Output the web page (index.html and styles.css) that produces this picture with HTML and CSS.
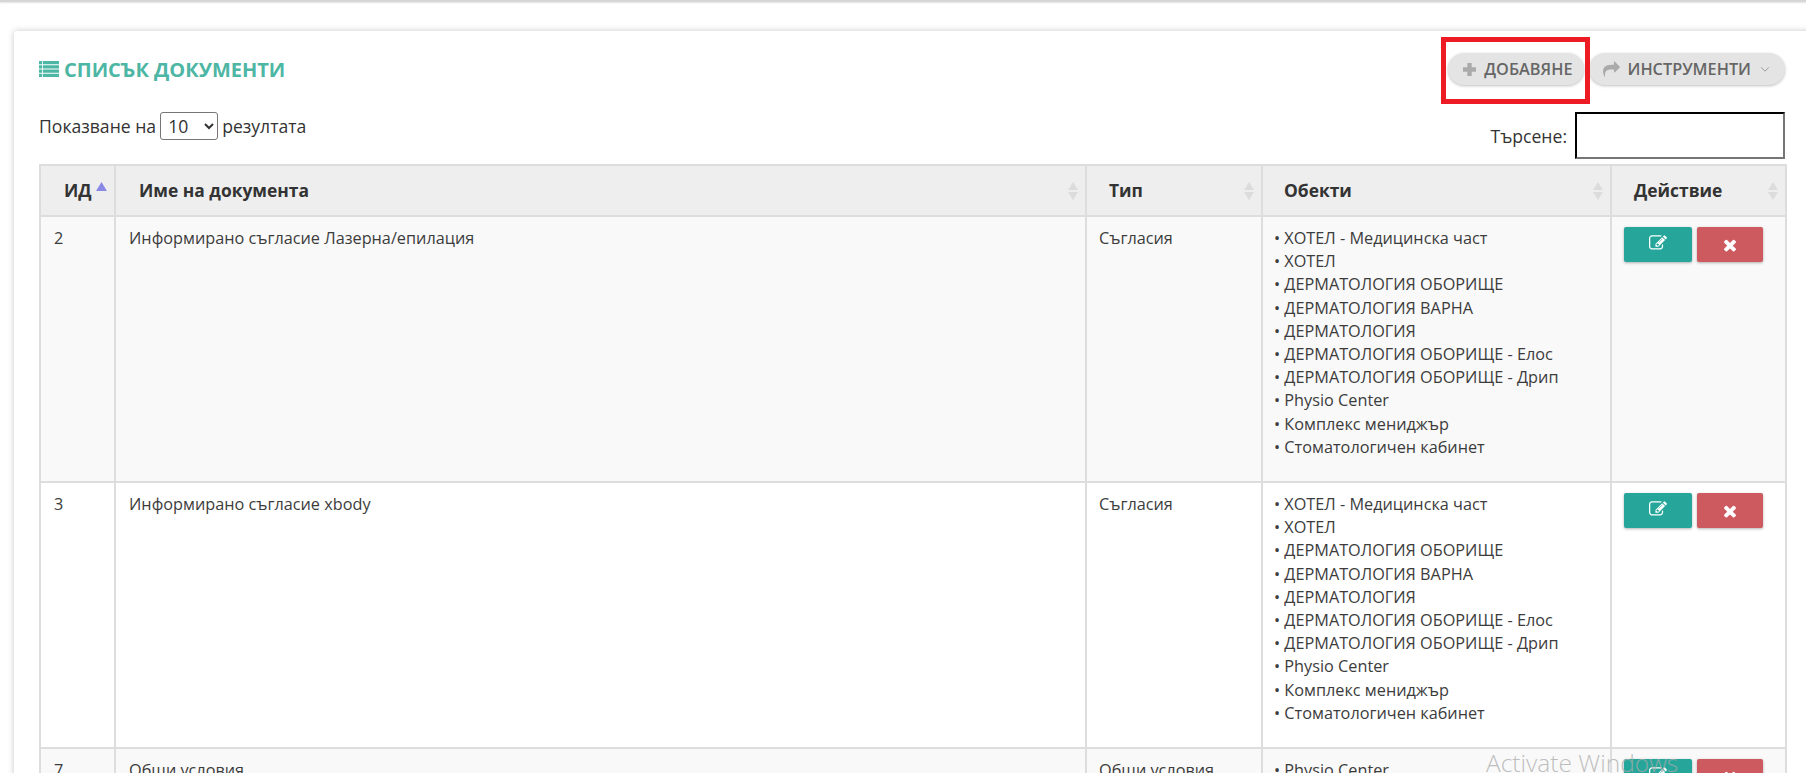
FILE: index.html
```html
<!DOCTYPE html>
<html lang="bg">
<head>
<meta charset="utf-8">
<title>Списък документи</title>
<link rel="stylesheet" href="styles.css">
</head>
<body>
<svg class="defs" aria-hidden="true">
  <symbol id="i-share" viewBox="0 0 1792 1792"><path d="M1792 640q0 26-19 45l-512 512q-19 19-45 19t-45-19-19-45v-256h-224q-98 0-175.500 6t-154 21.500-133 42.500-105.500 69.500-80 101-48.500 138.500-17.500 181q0 55 5 123 0 6 2.500 23.500t2.500 26.500q0 15-8.500 25t-23.500 10q-16 0-28-17-7-9-13-22t-13.500-30-10.500-24q-127-285-127-451 0-199 53-333 162-403 875-403h224v-256q0-26 19-45t45-19 45 19l512 512q19 19 19 45z"/></symbol>
  <symbol id="i-edit" viewBox="0 0 1792 1792"><path d="M888 1184l116-116-152-152-116 116v56h96v96h56zm440-720q-16-16-33 1l-350 350q-17 17-1 33t33-1l350-350q17-17 1-33zm80 594v190q0 119-84.500 203.500t-203.500 84.500h-832q-119 0-203.500-84.500t-84.500-203.500v-832q0-119 84.500-203.500t203.500-84.500h832q63 0 117 25 15 7 18 23 3 17-9 29l-49 49q-14 14-32 8-23-6-45-6h-832q-66 0-113 47t-47 113v832q0 66 47 113t113 47h832q66 0 113-47t47-113v-126q0-13 9-22l64-64q15-15 35-7t20 29zm-96-738l288 288-672 672h-288v-288zm444 132l-92 92-288-288 92-92q28-28 68-28t68 28l152 152q28 28 28 68t-28 68z"/></symbol>
  <symbol id="i-times" viewBox="0 0 1792 1792"><path d="M1490 1322q0 40-28 68l-136 136q-28 28-68 28t-68-28l-294-294-294 294q-28 28-68 28t-68-28l-136-136q-28-28-28-68t28-68l294-294-294-294q-28-28-28-68t28-68l136-136q28-28 68-28t68 28l294 294 294-294q28-28 68-28t68 28l136 136q28 28 28 68t-28 68l-294 294 294 294q28 28 28 68z"/></symbol>
  <symbol id="i-sort" viewBox="0 0 10 18"><path d="M5 0l5 8H0z"/><path d="M5 18l5-8H0z"/></symbol>
</svg>
<div class="topbar"></div>
<main class="card">
  <header class="card-head">
    <h1 class="title">
      <svg class="title-icon" viewBox="0 0 20 16"><path d="M0 0h3.200v3.200H0zM4 0h16v3.200H4zM0 4.270h3.200v3.200H0zM4 4.270h16v3.200H4zM0 8.530h3.200v3.200H0zM4 8.530h16v3.200H4zM0 12.800h3.200V16H0zM4 12.800h16V16H4z"/></svg>
      СПИСЪК ДОКУМЕНТИ
    </h1>
    <div class="tools">
      <button class="pill add" type="button">
        <svg class="pill-icon" viewBox="1 1 12 12"><path d="M5 1h4v4h4v4H9v4H5V9H1V5h4z"/></svg>
        ДОБАВЯНЕ
      </button>
      <button class="pill" type="button">
        <svg class="pill-icon share"><use href="#i-share"/></svg>
        ИНСТРУМЕНТИ
        <svg class="caret" viewBox="0 0 12 8"><path d="M1.500 1.500L6 6l4.500-4.500"/></svg>
      </button>
    </div>
  </header>
  <div class="controls">
    <label class="length">Показване на
      <select class="length-select"><option>10</option></select>
      резултата</label>
    <label class="search">Търсене:<input class="search-input" type="search"></label>
  </div>
  <table class="docs">
    <colgroup>
      <col class="c-id"><col class="c-name"><col class="c-type"><col class="c-obj"><col class="c-act">
    </colgroup>
    <thead>
      <tr>
        <th class="lead">ИД<svg class="sort active" viewBox="0 0 10 8"><path d="M5 0l5 8H0z"/></svg></th>
        <th class="lead">Име на документа<svg class="sort"><use href="#i-sort"/></svg></th>
        <th>Тип<svg class="sort"><use href="#i-sort"/></svg></th>
        <th class="obj">Обекти<svg class="sort"><use href="#i-sort"/></svg></th>
        <th>Действие<svg class="sort"><use href="#i-sort"/></svg></th>
      </tr>
    </thead>
    <tbody>
      <tr class="odd">
        <td class="lead">2</td>
        <td class="lead">Информирано съгласие Лазерна/епилация</td>
        <td>Съгласия</td>
        <td class="obj">
          <ul class="objects">
            <li>ХОТЕЛ - Медицинска част</li>
            <li>ХОТЕЛ</li>
            <li>ДЕРМАТОЛОГИЯ ОБОРИЩЕ</li>
            <li>ДЕРМАТОЛОГИЯ ВАРНА</li>
            <li>ДЕРМАТОЛОГИЯ</li>
            <li>ДЕРМАТОЛОГИЯ ОБОРИЩЕ - Елос</li>
            <li>ДЕРМАТОЛОГИЯ ОБОРИЩЕ - Дрип</li>
            <li>Physio Center</li>
            <li>Комплекс мениджър</li>
            <li>Стоматологичен кабинет</li>
          </ul>
        </td>
        <td class="actions">
          <button class="act edit" type="button"><svg class="act-icon"><use href="#i-edit"/></svg></button>
          <button class="act del" type="button"><svg class="act-icon"><use href="#i-times"/></svg></button>
        </td>
      </tr>
      <tr>
        <td class="lead">3</td>
        <td class="lead">Информирано съгласие xbody</td>
        <td>Съгласия</td>
        <td class="obj">
          <ul class="objects">
            <li>ХОТЕЛ - Медицинска част</li>
            <li>ХОТЕЛ</li>
            <li>ДЕРМАТОЛОГИЯ ОБОРИЩЕ</li>
            <li>ДЕРМАТОЛОГИЯ ВАРНА</li>
            <li>ДЕРМАТОЛОГИЯ</li>
            <li>ДЕРМАТОЛОГИЯ ОБОРИЩЕ - Елос</li>
            <li>ДЕРМАТОЛОГИЯ ОБОРИЩЕ - Дрип</li>
            <li>Physio Center</li>
            <li>Комплекс мениджър</li>
            <li>Стоматологичен кабинет</li>
          </ul>
        </td>
        <td class="actions">
          <button class="act edit" type="button"><svg class="act-icon"><use href="#i-edit"/></svg></button>
          <button class="act del" type="button"><svg class="act-icon"><use href="#i-times"/></svg></button>
        </td>
      </tr>
      <tr class="odd">
        <td class="lead">7</td>
        <td class="lead">Общи условия</td>
        <td>Общи условия</td>
        <td class="obj">
          <ul class="objects">
            <li>Physio Center</li>
          </ul>
        </td>
        <td class="actions">
          <button class="act edit" type="button"><svg class="act-icon"><use href="#i-edit"/></svg></button>
          <button class="act del" type="button"><svg class="act-icon"><use href="#i-times"/></svg></button>
        </td>
      </tr>
    </tbody>
  </table>
</main>
<div class="marker"></div>
<div class="watermark">Activate Windows</div>
</body>
</html>
```

FILE: styles.css
```css
* { box-sizing: border-box; }
html, body { height: 100%; }
body {
  margin: 0;
  overflow: hidden;
  background: #fff;
  color: #333;
  font-family: "Open Sans", "Liberation Sans", sans-serif;
  font-size: 17.600px;
  position: relative;
}
.defs { display: none; }
.topbar {
  height: 2px;
  background: #d6d6d6;
  box-shadow: 0 1px 2px rgba(0, 0, 0, .12);
}
.card {
  margin: 29px 0 0 14px;
  width: 1840px;
  padding: 22px 0 0 25px;
  background: #fff;
  box-shadow: 0 0 6px rgba(0, 0, 0, .22);
  border-radius: 3px;
}
.card-head {
  display: flex;
  justify-content: space-between;
  align-items: center;
  width: 1746px;
  height: 32px;
}
.title {
  margin: 0;
  display: flex;
  align-items: center;
  gap: 5px;
  font-size: 20px;
  font-weight: 700;
  color: #4db6a4;
}
.title-icon { width: 20px; height: 16px; fill: #4db6a4; }
.tools { display: flex; gap: 5px; }
.pill {
  height: 32px;
  display: flex;
  align-items: center;
  gap: 8px;
  padding: 0 12px 0 14px;
  border: 0;
  border-radius: 16px;
  background: #e4e4e4;
  box-shadow: 0 1px 3px rgba(0, 0, 0, .25);
  color: #666;
  font: 600 16.300px "Open Sans", sans-serif;
}
.pill.add { padding: 0 11px 0 15px; }
.pill-icon { width: 13px; height: 13px; fill: #aaa; }
.pill-icon.share { width: 17px; height: 17px; }
.caret { width: 10px; height: 7px; fill: none; stroke: #999; stroke-width: 1.200; margin: 0 3px 0 1px; }
.controls {
  width: 1746px;
  display: flex;
  justify-content: space-between;
  align-items: flex-start;
  margin-top: 27px;
}
.length { display: flex; align-items: center; gap: 4px; height: 28px; }
.length-select {
  width: 58px;
  height: 28px;
  font: 17.600px "Open Sans", sans-serif;
  color: #333;
  background: #fff;
  border: 1px solid #767676;
  border-radius: 3px;
  padding-left: 3px;
}
.search { display: flex; align-items: center; gap: 8px; }
.search-input {
  width: 210px;
  height: 47px;
  border: 2px inset #767676;
  background: #fff;
  appearance: none;
  border-radius: 0;
  outline: 0;
  border-color: #1f1f1f #767676 #767676 #1f1f1f;
}
.docs {
  width: 1746px;
  margin-top: 5px;
  table-layout: fixed;
  border-collapse: collapse;
  font-size: 16.250px;
}
.c-id { width: 75px; }
.c-name { width: 971px; }
.c-type { width: 176px; }
.c-obj { width: 349px; }
.c-act { width: 175px; }
.docs th, .docs td { border: 2px solid #ddd; vertical-align: top; }
.docs th {
  position: relative;
  height: 51px;
  padding: 12px 40px 0 22px;
  background: #eee;
  text-align: left;
  font-size: 17.400px;
  font-weight: 700;
}
.docs th.lead { padding-left: 23px; }
.docs th.obj { padding-left: 21px; }
.docs td { padding: 10px 12px 22px; line-height: 23.200px; color: #3c3c3c; }
.docs td.lead { padding-left: 13px; }
.docs td.obj { padding-left: 11px; }
.odd td { background: #f9f9f9; }
.sort {
  position: absolute;
  right: 7px;
  top: 16px;
  width: 10px;
  height: 18px;
  fill: #dcdcdc;
}
.sort.active {
  fill: #8a8ae6;
  width: 11px;
  height: 9px;
  right: 7px;
  top: 16px;
}
.objects { list-style: none; margin: 0; padding: 0; }
.objects li::before { content: "• "; }
.docs .actions { padding: 10px 0 0 12px; }
.act {
  height: 35px;
  border: 0;
  border-radius: 2px;
  box-shadow: 0 1px 3px rgba(0, 0, 0, .3);
  vertical-align: top;
  padding: 0;
}
.act.edit { width: 68px; background: #26a69a; margin-right: 1px; }
.act.del { width: 66px; background: #cd5a5f; }
.act-icon { display: block; margin: auto; width: 18px; height: 18px; fill: #fff; }
.edit .act-icon { margin-bottom: 3px; }
.marker {
  position: absolute;
  left: 1441px;
  top: 37px;
  width: 149px;
  height: 67px;
  border: 5px solid #ed1c24;
}
.watermark {
  position: absolute;
  left: 1486px;
  top: 746px;
  font: 300 24.500px "Open Sans", sans-serif;
  color: rgba(170, 170, 170, .75);
  white-space: nowrap;
}
```
